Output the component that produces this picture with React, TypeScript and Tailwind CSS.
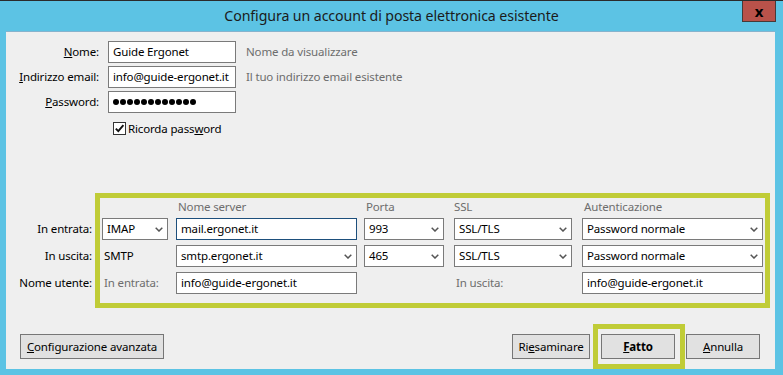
import type { ReactNode } from "react";

const ui = "font-['Noto_Sans',sans-serif] text-[11.5px] tracking-[-0.15px] text-black";

function Chevron() {
  return (
    <svg width="8" height="5" viewBox="0 0 8 5" className="shrink-0">
      <polyline points="0.7,0.7 4,4 7.3,0.7" fill="none" stroke="#555" strokeWidth="1.5" />
    </svg>
  );
}

function Input({ value, w, focused }: { value: ReactNode; w: string; focused?: boolean }) {
  return (
    <div
      className={`flex h-[22px] ${w} items-center border bg-white pl-[4px] ${focused ? "border-[#1d4f7c]" : "border-[#7a7a7a]"}`}
    >
      {value}
    </div>
  );
}

function Select({ value, w }: { value: string; w: string }) {
  return (
    <div className={`flex h-[22px] ${w} items-center justify-between border border-[#7a7a7a] bg-white pl-[4px] pr-[4px]`}>
      <span>{value}</span>
      <Chevron />
    </div>
  );
}

function Button({ children, w, bold }: { children: ReactNode; w: string; bold?: boolean }) {
  return (
    <div
      className={`flex h-[25px] ${w} items-center justify-center border border-[#767676] bg-[#e1e1e1] ${bold ? "font-bold" : ""}`}
    >
      {children}
    </div>
  );
}

function FormRow({ label, children, hint }: { label: ReactNode; children: ReactNode; hint?: string }) {
  return (
    <div className="flex h-[22px] items-center">
      <div className="w-[94px] pr-[1px] text-right">{label}</div>
      <div className="ml-[8px]">{children}</div>
      {hint && <div className="ml-[10px] text-[#6d6d6d]">{hint}</div>}
    </div>
  );
}

export default function App() {
  return (
    <div className={`${ui} flex h-[375px] w-[783px] flex-col overflow-hidden border-t border-[#2b2b2b] bg-[#5cc3e4]`}>
      {/* title bar */}
      <div className="relative flex h-[30px] shrink-0 items-center justify-center">
        <span className="text-[14.2px] tracking-[-0.1px] text-[#1b1b1b]">
          Configura un account di posta elettronica esistente
        </span>
        <div className="absolute right-[7px] top-[-1px] flex h-[22px] w-[34px] items-center justify-center border border-[#473a38] bg-[#b9524a]">
          <span className="text-[15px] font-bold leading-none text-black">x</span>
        </div>
      </div>

      {/* dialog body */}
      <div className="ml-[6px] flex h-[338px] w-[769px] flex-col border-t border-[#86b3cd] bg-[#efefef]">
        <div className="flex flex-col gap-[3px] pt-[9px]">
          <FormRow label={<><u>N</u>ome:</>} hint="Nome da visualizzare">
            <Input w="w-[128px]" value="Guide Ergonet" />
          </FormRow>
          <FormRow label={<><u>I</u>ndirizzo email:</>} hint="Il tuo indirizzo email esistente">
            <Input w="w-[128px]" value="info@guide-ergonet.it" />
          </FormRow>
          <FormRow label={<><u>P</u>assword:</>}>
            <Input
              w="w-[128px]"
              value={
                <span className="flex gap-[1px]">
                  {Array.from({ length: 12 }).map((_, i) => (
                    <span key={i} className="h-[6px] w-[6px] rounded-full bg-black" />
                  ))}
                </span>
              }
            />
          </FormRow>
        </div>

        <div className="ml-[107px] mt-[9px] flex h-[13px] items-center gap-[2px]">
          <div className="flex h-[13px] w-[13px] items-center justify-center border border-[#333] bg-white">
            <svg width="11" height="11" viewBox="0 0 11 11">
              <path d="M1.8 5.6 L4.3 8.2 L9.4 2.2" fill="none" stroke="#111" strokeWidth="1.9" />
            </svg>
          </div>
          <span>
            Ricorda pass<u>w</u>ord
          </span>
        </div>

        {/* server settings */}
        <div className="mt-[58px] flex">
          <div className="flex w-[89px] flex-col gap-[5px] pr-[3px] pt-[25px] text-right">
            <div className="flex h-[22px] items-center justify-end">In entrata:</div>
            <div className="flex h-[22px] items-center justify-end">In uscita:</div>
            <div className="flex h-[22px] items-center justify-end">Nome utente:</div>
          </div>
          <div className="w-[675px] border-[5px] border-[#c0cc37] pb-[9px] pl-[2px]">
            <div className="grid grid-cols-[74px_188px_90px_128px_181px] grid-rows-[15px_22px_22px_22px] gap-y-[5px]">
              <div />
              <div className="pl-[2px] leading-[17px] text-[#6d6d6d]">Nome server</div>
              <div className="pl-[2px] leading-[17px] text-[#6d6d6d]">Porta</div>
              <div className="leading-[17px] text-[#6d6d6d]">SSL</div>
              <div className="pl-[2px] leading-[17px] text-[#6d6d6d]">Autenticazione</div>

              <Select w="w-[66px]" value="IMAP" />
              <Input w="w-[181px]" value="mail.ergonet.it" focused />
              <Select w="w-[80px]" value="993" />
              <Select w="w-[118px]" value="SSL/TLS" />
              <Select w="w-[181px]" value="Password normale" />

              <div className="flex h-[22px] items-center pl-[2px]">SMTP</div>
              <Select w="w-[181px]" value="smtp.ergonet.it" />
              <Select w="w-[80px]" value="465" />
              <Select w="w-[118px]" value="SSL/TLS" />
              <Select w="w-[181px]" value="Password normale" />

              <div className="flex h-[22px] items-center pl-[2px] text-[#6d6d6d]">In entrata:</div>
              <Input w="w-[181px]" value="info@guide-ergonet.it" />
              <div />
              <div className="flex h-[22px] items-center pl-[2px] text-[#6d6d6d]">In uscita:</div>
              <Input w="w-[181px]" value="info@guide-ergonet.it" />
            </div>
          </div>
        </div>

        {/* footer buttons */}
        <div className="mt-auto flex items-end justify-between pl-[14px] pr-[15px]">
          <div className="mb-[10px]">
            <Button w="w-[144px]">
              <span>
                <u>C</u>onfigurazione avanzata
              </span>
            </Button>
          </div>
          <div className="flex items-end">
            <div className="mb-[10px]">
              <Button w="w-[78px]">
                <span>
                  Ri<u>e</u>saminare
                </span>
              </Button>
            </div>
            <div className="ml-[3px] border-[5px] border-[#c0cc37] pb-[5px] pl-[3px] pr-[5px] pt-[5px]">
              <Button w="w-[74px]" bold>
                <span>
                  <u>F</u>atto
                </span>
              </Button>
            </div>
            <div className="mb-[10px] ml-[1px]">
              <Button w="w-[74px]">
                <span>
                  <u>A</u>nnulla
                </span>
              </Button>
            </div>
          </div>
        </div>
      </div>
    </div>
  );
}
